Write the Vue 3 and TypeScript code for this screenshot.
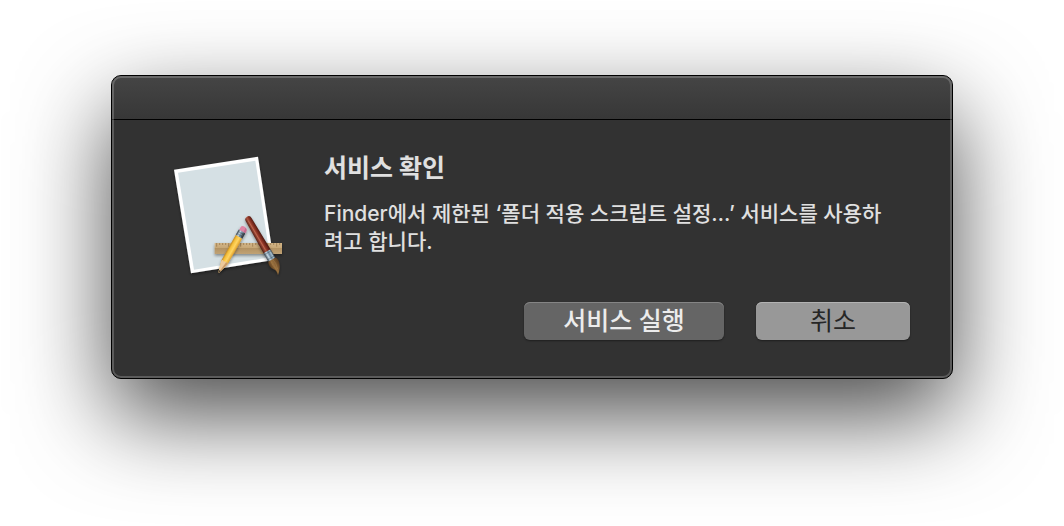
<script setup lang="ts">
import { ref } from 'vue'

const open = ref(true)
const serviceName = '폴더 적용 스크립트 설정…'
const ticks = Array.from({ length: 22 }, (_, i) => ({
  x: 155 + i * 9,
  length: i % 4 === 0 ? 11 : 6,
}))

function close(): void {
  open.value = false
}
</script>

<template>
  <main class="stage">
    <section
      v-if="open"
      class="dialog"
      role="alertdialog"
      aria-labelledby="dialog-title"
      aria-describedby="dialog-text"
    >
      <header class="titlebar"></header>
      <div class="body">
        <div class="message">
          <svg class="app-icon" viewBox="0 15 390 390" aria-hidden="true">
            <defs>
              <linearGradient id="ruler" x1="0" y1="0" x2="0" y2="1">
                <stop offset="0" stop-color="#d2b588" />
                <stop offset="0.42" stop-color="#c7a877" />
                <stop offset="0.5" stop-color="#b39363" />
                <stop offset="1" stop-color="#c0a275" />
              </linearGradient>
              <linearGradient id="pencil" x1="0" y1="0" x2="1" y2="0">
                <stop offset="0" stop-color="#c58a20" />
                <stop offset="0.25" stop-color="#f5c03c" />
                <stop offset="0.6" stop-color="#ffd562" />
                <stop offset="1" stop-color="#e0a02a" />
              </linearGradient>
              <linearGradient id="handle" x1="0" y1="0" x2="1" y2="0">
                <stop offset="0" stop-color="#4a1a13" />
                <stop offset="0.4" stop-color="#ad5540" />
                <stop offset="0.6" stop-color="#8c3324" />
                <stop offset="1" stop-color="#45160f" />
              </linearGradient>
              <linearGradient id="metal" x1="0" y1="0" x2="1" y2="0">
                <stop offset="0" stop-color="#384450" />
                <stop offset="0.3" stop-color="#c9dce8" />
                <stop offset="0.55" stop-color="#6c879d" />
                <stop offset="0.8" stop-color="#a4bbc9" />
                <stop offset="1" stop-color="#27313a" />
              </linearGradient>
              <linearGradient id="bristle" x1="0" y1="0" x2="1" y2="0">
                <stop offset="0" stop-color="#5b3b1c" />
                <stop offset="0.4" stop-color="#98703f" />
                <stop offset="1" stop-color="#5a3c20" />
              </linearGradient>
              <filter id="drop" x="-30%" y="-30%" width="160%" height="160%">
                <feDropShadow dx="0" dy="5" stdDeviation="4" flood-color="#000" flood-opacity="0.4" />
              </filter>
            </defs>
            <g filter="url(#drop)">
              <path d="M27 74 279 35 326 345 78 385Z" fill="#fff" />
            </g>
            <path d="M39 83 271 47 315 337 87 374Z" fill="#d5e0e4" />
            <g filter="url(#drop)">
              <path d="M149 294H351V327H149Z" fill="url(#ruler)" />
              <path
                v-for="tick in ticks"
                :key="tick.x"
                :d="`M${tick.x} 294v${tick.length}`"
                stroke="#8f7044"
                stroke-width="2"
              />
            </g>
            <g filter="url(#drop)">
              <g transform="translate(234 254) rotate(29.5)">
                <path d="M-10 3V-3Q-9 -10 0 -10T11 -3V7H-10Z" fill="#df84a4" />
                <path d="M4 -9Q11 -6 11 -1V7H5Z" fill="#c56c90" />
                <path d="M-11 6H11V25H-11Z" fill="url(#metal)" />
                <path d="M-11 12H11M-11 19H11" stroke="#2c333c" stroke-width="1" />
                <path d="M4 7H11V24H4Z" fill="#2b3037" opacity="0.7" />
                <path d="M-11 25H11V112L1 148H-1L-11 112Z" fill="url(#pencil)" />
                <path d="M-11 112Q-7 107 -4 112 0 107 4 112 8 107 11 112L1 149H-1Z" fill="#edc99b" />
                <path d="M4 112Q8 107 11 112L1 149 0 144Z" fill="#c99a68" />
                <path d="M-3 141H3L1 149H-1Z" fill="#40372e" />
              </g>
            </g>
            <g filter="url(#drop)">
              <g transform="translate(246 215) rotate(-30)">
                <path d="M-10 10Q-10 0 0 0T10 10L12 121H-12Z" fill="url(#handle)" />
                <path d="M-3 12-2 114" stroke="#e28a6d" stroke-width="2" opacity="0.45" />
                <path d="M-12 120H12L13 149H-12Z" fill="url(#metal)" />
                <path d="M-12 125H12M-12 143H12" stroke="#34404a" stroke-width="1" />
                <path d="M-12 149H13Q19 158 14 170 11 182 -7 198 -3 185 -9 177 -20 162 -12 149Z" fill="url(#bristle)" />
                <path d="M-5 152Q-8 166 -2 181M3 151Q7 164 1 182" fill="none" stroke="#b58a50" stroke-width="1" />
              </g>
            </g>
          </svg>
          <div class="copy">
            <h1 id="dialog-title">서비스 확인</h1>
            <p id="dialog-text">Finder에서 제한된 ‘{{ serviceName }}’ 서비스를 사용하려고 합니다.</p>
          </div>
        </div>
        <div class="actions">
          <button type="button" class="run" @click="close">서비스 실행</button>
          <button type="button" class="cancel" @click="close">취소</button>
        </div>
      </div>
    </section>
  </main>
</template>

<style>
body {
  margin: 0;
  background: #fff;
}
</style>

<style scoped>
.stage {
  box-sizing: border-box;
  min-height: 100vh;
  padding: 75px 111px;
  overflow: hidden;
  font-family: Inter, 'Noto Sans CJK KR', sans-serif;
  color: #e0e0e0;
}

.dialog {
  position: relative;
  border: 1px solid #000;
  border-radius: 10px;
  background: #323232;
  box-shadow: 0 36px 92px rgba(0, 0, 0, 0.71);
}

.dialog::after {
  content: '';
  position: absolute;
  inset: 0;
  border: 2px solid rgba(255, 255, 255, 0.2);
  border-radius: 9px;
  pointer-events: none;
}

.titlebar {
  height: 43px;
  border-bottom: 1px solid #000;
  border-radius: 9px 9px 0 0;
  background: linear-gradient(#454545, #373737);
}

.body {
  padding: 30px 42px 38px 53px;
}

.message {
  display: flex;
  gap: 29px;
}

.app-icon {
  flex: none;
  width: 130px;
  height: 130px;
}

.copy {
  flex: 1;
  padding: 2px 20px 0 0;
}

h1 {
  margin: 0 0 16px;
  font-size: 25px;
  line-height: 32px;
  font-weight: 700;
}

p {
  margin: 0;
  font-size: 21px;
  line-height: 28px;
  font-weight: 500;
}

.actions {
  display: flex;
  justify-content: flex-end;
  gap: 32px;
  margin-top: 22px;
}

button {
  height: 38px;
  padding: 0;
  border: 0;
  border-radius: 6px;
  font-family: inherit;
  font-size: 25px;
  line-height: 36px;
  font-weight: 500;
}

.run {
  width: 200px;
  background: #656565;
  color: #ececec;
  box-shadow: inset 0 1px #858585, 0 1px 2px rgba(0, 0, 0, 0.4);
}

.cancel {
  width: 154px;
  background: #989898;
  color: #262626;
  font-weight: 400;
  box-shadow: inset 0 1px #b3b3b3, 0 1px 2px rgba(0, 0, 0, 0.4);
}
</style>
